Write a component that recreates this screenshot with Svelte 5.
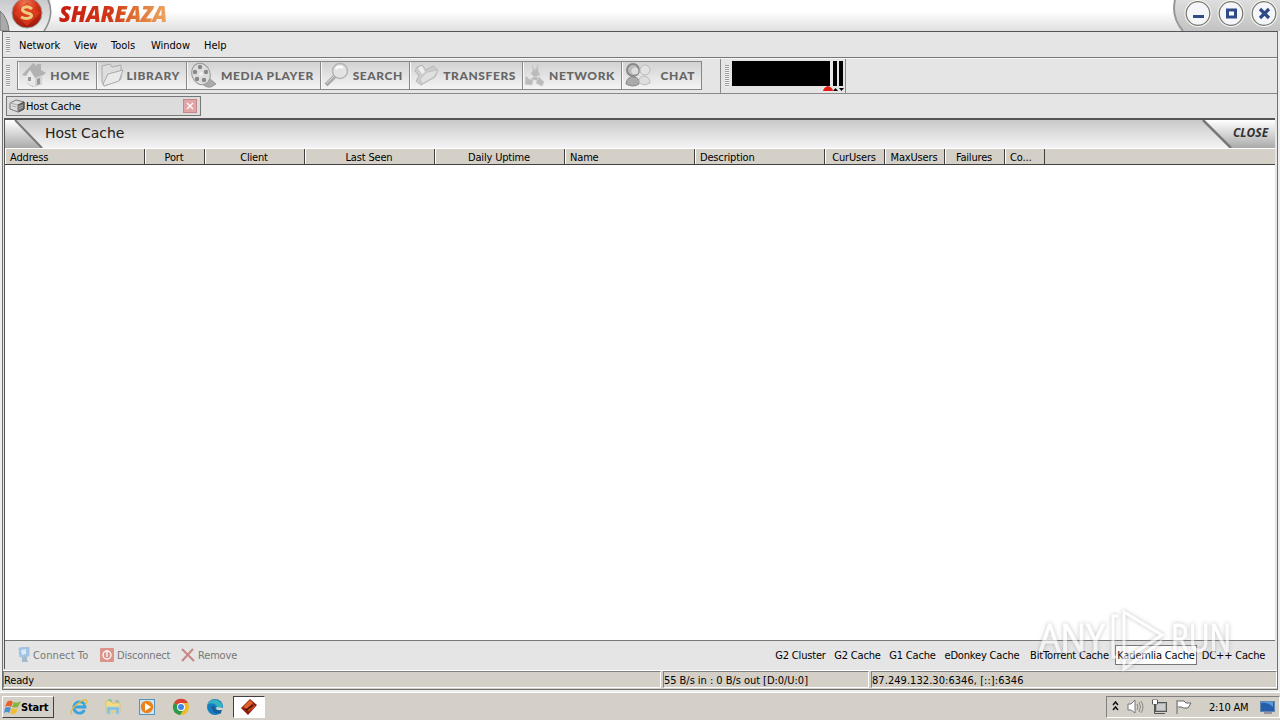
<script lang="ts">
	const menus = [
		{ text: 'Network', width: 55 },
		{ text: 'View', width: 37 },
		{ text: 'Tools', width: 40 },
		{ text: 'Window', width: 53 },
		{ text: 'Help', width: 36 }
	];

	const tools = [
		{ text: 'HOME', icon: 'home', width: 78 },
		{ text: 'LIBRARY', icon: 'library', width: 89 },
		{ text: 'MEDIA PLAYER', icon: 'media', width: 133 },
		{ text: 'SEARCH', icon: 'search', width: 88 },
		{ text: 'TRANSFERS', icon: 'transfers', width: 112 },
		{ text: 'NETWORK', icon: 'network', width: 98 },
		{ text: 'CHAT', icon: 'chat', width: 79 }
	];

	const columns = [
		{ text: 'Address', width: 140, align: 'left' },
		{ text: 'Port', width: 60, align: 'center' },
		{ text: 'Client', width: 100, align: 'center' },
		{ text: 'Last Seen', width: 130, align: 'center' },
		{ text: 'Daily Uptime', width: 130, align: 'center' },
		{ text: 'Name', width: 130, align: 'left' },
		{ text: 'Description', width: 130, align: 'left' },
		{ text: 'CurUsers', width: 60, align: 'center' },
		{ text: 'MaxUsers', width: 60, align: 'center' },
		{ text: 'Failures', width: 60, align: 'center' },
		{ text: 'Co...', width: 40, align: 'left' }
	];

	const caches = [
		{ text: 'G2 Cluster', width: 59 },
		{ text: 'G2 Cache', width: 55 },
		{ text: 'G1 Cache', width: 55 },
		{ text: 'eDonkey Cache', width: 84 },
		{ text: 'BitTorrent Cache', width: 91 },
		{ text: 'Kademlia Cache', width: 82 },
		{ text: 'DC++ Cache', width: 73 }
	];
	let selected = $state('Kademlia Cache');
</script>

<div class="screen">
	<header class="titlebar">
		<svg class="logo" width="59" height="31">
			<defs>
				<linearGradient id="disc" x1="0" y1="0" x2="0" y2="1">
					<stop offset="0" stop-color="#c8cacc" />
					<stop offset="1" stop-color="#eee" />
				</linearGradient>
				<radialGradient id="ball" cx=".45" cy=".2" r=".8">
					<stop offset="0" stop-color="#ee8060" />
					<stop offset=".45" stop-color="#d43518" />
					<stop offset="1" stop-color="#9c180b" />
				</radialGradient>
			</defs>
			<path d="M0 0H50Q54 14 44 31H0Z" fill="url(#disc)" />
			<path d="M0 11Q8 18 9 31H0Z" fill="#aaa" stroke="#777" />
			<path d="M48 0Q55 15 44 31" fill="none" stroke="#8b8b8b" stroke-width="1.5" />
			<circle cx="27" cy="13" r="15" fill="url(#ball)" stroke="#999" />
			<path d="M14 13L27 2L40 13L27 26Z" fill="#e0401f" opacity=".7" />
			<path d="M32 9Q28 5 23 8Q21 11 27 13Q33 14 31 17Q27 20 21 17" fill="none" stroke="#f0cc80" stroke-width="3" />
		</svg>
		<span class="brand">SHAREAZA</span>
		<svg class="caption" width="108" height="31">
			<defs>
				<linearGradient id="cap" x1="0" y1="0" x2="0" y2="1">
					<stop offset="0" stop-color="#dedede" />
					<stop offset="1" stop-color="#c2c2c2" />
				</linearGradient>
			</defs>
			<path d="M3 0Q-1 17 11 31H108V0Z" fill="url(#cap)" />
			<path d="M3 0Q-1 17 11 31" fill="none" stroke="#999" stroke-width="2" />
			{#each [26, 59, 92] as cx}
				<circle {cx} cy="13.500" r="13.500" fill="#f8f8f4" />
				<circle {cx} cy="13.500" r="11.800" fill="#f4f6fa" stroke="#77786e" stroke-width="1.300" />
			{/each}
			<path d="M21 16.500H32" stroke="#304a87" stroke-width="3" />
			<rect x="55.500" y="10" width="8" height="7" fill="#fff" stroke="#304a87" stroke-width="3" />
			<path d="M88 9L97 18M97 9L88 18" stroke="#304a87" stroke-width="3.200" />
		</svg>
	</header>

	<div class="frame">
		<nav class="menubar">
			<i class="grip"></i>
			{#each menus as menu}
				<span style="width: {menu.width}px">{menu.text}</span>
			{/each}
		</nav>

		<div class="toolbar">
			<i class="grip tall"></i>
			<div class="tools">
				{#each tools as tool}
					<button class={tool.icon} style="width: {tool.width}px">
						{@render toolIcon(tool.icon)}
						<span>{tool.text}</span>
					</button>
				{/each}
			</div>
			<div class="monitor">
				<i class="grip tall"></i>
				<svg width="116" height="32">
					<path d="M0 1H98V26H0ZM101 1H105V26H101ZM107 1H111V26H107Z" />
					<path d="M91 31Q92 27 96 26Q101 28 101 31Z" fill="#e31b12" />
					<path d="M101 31L103.500 28L106 31ZM107 28H112L109.500 31Z" />
				</svg>
			</div>
		</div>

		<div class="tabs">
			<div class="tab">
				<svg width="17" height="14">
					<path d="M1 4L7 1L15 3V10L9 13L1 10Z" fill="#ddd" stroke="#777" />
					<path d="M9 6L15 3V10L9 13Z" fill="#777" stroke="#444" />
					<path d="M1 4L9 6V13M3 7L7 8M10 8L14 6M10 10L14 8" fill="none" stroke="#aaa" />
				</svg>
				<span>Host Cache</span>
				<svg width="14" height="14">
					<rect x=".5" y=".5" width="13" height="13" fill="#e2a4a6" stroke="#c6878a" />
					<path d="M4 4L10 10M10 4L4 10" stroke="#fff" stroke-width="1.300" />
				</svg>
			</div>
		</div>

		<main>
			<div class="heading">
				<svg width="40" height="28">
					<defs>
						<linearGradient id="corner" x1="0" y1="0" x2="0" y2="1">
							<stop offset="0" stop-color="#fff" />
							<stop offset="1" stop-color="#aaa" />
						</linearGradient>
					</defs>
					<path d="M0 0H10L37 28H0Z" fill="url(#corner)" />
					<path d="M10 0L37 28" stroke="#777" stroke-width="2" />
				</svg>
				<h1>Host Cache</h1>
				<div class="close">
					<svg width="32" height="28">
						<path d="M2 0L30 28H32V0Z" fill="url(#corner)" />
						<path d="M2 0L30 28" stroke="#777" stroke-width="2.500" />
					</svg>
					<b>CLOSE</b>
				</div>
			</div>
			<div class="columns">
				{#each columns as column}
					<span class={column.align} style="width: {column.width}px">{column.text}</span>
				{/each}
			</div>
			<div class="list"></div>
			<div class="actions">
				<svg width="12" height="16" class="faded">
					<path d="M1 1L11 0V9L2 10Z" fill="#8bb9e7" stroke="#8fb4da" />
					<path d="M3 3L8 2V7L4 8Z" fill="#d5eafd" />
					<path d="M4 10H9V12L10 15H4Z" fill="#8fabc6" />
				</svg>
				<span class="connect">Connect To</span>
				<svg width="14" height="14">
					<rect width="14" height="14" rx="1" fill="#dc938a" />
					<circle cx="7" cy="7" r="4" fill="none" stroke="#fff" stroke-width="1.300" />
					<path d="M7 4V9" stroke="#fff" stroke-width="1.300" />
				</svg>
				<span class="disconnect">Disconnect</span>
				<svg width="14" height="14">
					<path d="M1 1L13 13M12 1L1 13" stroke="#c98686" stroke-width="2" />
				</svg>
				<span class="remove">Remove</span>
				<div class="caches">
					{#each caches as cache}
						<button class:selected={selected === cache.text} style="width: {cache.width}px" onclick={() => (selected = cache.text)}>{cache.text}</button>
					{/each}
				</div>
			</div>
		</main>

		<footer>
			<span class="ready">Ready</span>
			<span class="speed">55 B/s in : 0 B/s out [D:0/U:0]</span>
			<span class="address">87.249.132.30:6346, [::]:6346</span>
		</footer>
	</div>

	<div class="taskbar">
		<button class="start">
			<svg width="18" height="17">
				<path d="M4 3Q7 0 10 3L8 8Q5 6 2 8Z" fill="#e7612c" />
				<path d="M11 3Q14 5 18 2L15 8Q12 9 9 8Z" fill="#81b83c" />
				<path d="M2 9Q5 7 8 9L6 14Q4 12 1 14Z" fill="#4b91d1" />
				<path d="M9 9Q12 11 15 9L13 14Q9 16 7 14Z" fill="#f4bc30" />
			</svg>
			<span>Start</span>
		</button>
		<div class="apps">
			<svg viewBox="0 0 18 18">
				<path d="M14.500 12Q12 16 8 15Q3 13 4 8Q6 3 11 4Q15 5 15 9H5" fill="none" stroke="#37a4df" stroke-width="2.800" />
				<path d="M2 16Q-1 14 6 7Q13 1 16 2Q18 3 15 7" fill="none" stroke="#e7b93f" stroke-width="1.300" />
			</svg>
			<svg viewBox="0 0 18 18">
				<path d="M2 3H7L8 5H16V14H2Z" fill="#f4db84" stroke="#dcc36e" />
				<path d="M4 2H7V4M11 3H14V5" fill="none" stroke="#8cc09a" stroke-width="1.500" />
				<path d="M3 9H15V16H12V12H6V16H3Z" fill="#80bddd" stroke="#a9cfe0" />
			</svg>
			<svg viewBox="0 0 18 18">
				<rect x="1.500" y="1.500" width="15" height="15" fill="#cce5f4" stroke="#5395be" />
				<circle cx="9" cy="9" r="6.200" fill="#ec8219" />
				<path d="M7 5L13 9L7 13Z" fill="#fff" />
			</svg>
			<svg viewBox="0 0 18 18">
				<circle cx="9" cy="9" r="8" fill="#edbd29" />
				<path d="M9 9L2 5A8 8 0 0 1 16 5H9Z" fill="#d94235" />
				<path d="M2 5A8 8 0 0 0 8 17L12 11L9 9Z" fill="#2b9a4b" />
				<circle cx="9" cy="9" r="4" fill="#fff" />
				<circle cx="9" cy="9" r="3" fill="#4385e9" />
			</svg>
			<svg viewBox="0 0 18 18">
				<circle cx="9" cy="9" r="8" fill="#167dbe" />
				<path d="M2 5Q9-2 16 6Q18 11 11 12Q9 10 11 8Q8 4 2 6Z" fill="#35b5c0" />
				<path d="M7 8Q7 15 15 14" fill="none" stroke="#155f9b" stroke-width="3" />
				<path d="M11 9Q9 11 12 12L17 12V10Z" fill="#d6d0c8" />
			</svg>
			<div class="active">
				<svg viewBox="0 0 18 18">
					<path d="M1 10L10 1L17 7L8 17Z" fill="#8a1c0e" />
					<path d="M3 9L10 2L13 5L7 11Z" fill="#e0602a" />
					<path d="M9 14L16 8L12 6L7 11Z" fill="#c23c1c" />
					<path d="M6 12L13 7" fill="none" stroke="#401009" stroke-width="1.500" />
				</svg>
			</div>
		</div>
		<div class="tray">
			<svg width="9" height="12">
				<path d="M2 4L4.500 1L7 4M2 9L4.500 6L7 9" fill="none" stroke="#111" stroke-width="1.500" />
			</svg>
			<svg width="17" height="16">
				<path d="M1 5H4L8 1V14L4 11H1Z" fill="#fff" stroke="#777" />
				<path d="M10 5Q12 8 10 11M12 3Q15 8 12 13M14 2Q18 8 14 14" fill="none" stroke="#888" />
			</svg>
			<svg width="17" height="16">
				<rect x="4.500" y="3.500" width="11" height="9" fill="#aaa" stroke="#555" />
				<rect x="6" y="5" width="8" height="6" fill="#ccc" />
				<path d="M1.500 1V5H6.500V1ZM3.500 5V14.500H14" fill="none" stroke="#555" />
				<rect x="2" y="1" width="4" height="4" fill="#fff" />
			</svg>
			<svg width="17" height="16">
				<path d="M2 1V15M3 2H9L11 4H16L13 9H8L7 8H3" fill="#fff" stroke="#666" />
			</svg>
			<time>2:10 AM</time>
			<svg width="15" height="13">
				<rect x=".5" y=".5" width="14" height="10" fill="#245eac" stroke="#6388ab" />
				<path d="M1 2Q8 1 13 6V1H1Z" fill="#579add" />
				<path d="M4 12H12" stroke="#557" />
			</svg>
		</div>
	</div>

	<svg class="watermark" width="200" height="70" viewBox="0 0 200 70">
		<text x="1" y="47" textLength="66" lengthAdjust="spacingAndGlyphs">ANY</text>
		<text x="133" y="47" textLength="60" lengthAdjust="spacingAndGlyphs">RUN</text>
		<path d="M80 11H75V52H80M86 7L124 30L86 55ZM86 55V64L124 36" />
	</svg>
</div>

{#snippet toolIcon(name: string)}
	<svg class="icon" width="26" height="26" viewBox="0 0 26 26">
		{#if name === 'home'}
			<path d="M1 13L12 1L16 4V2H20V8L25 11L21 14V22L12 25L5 21V14Z" fill="#b2b2b2" />
			<path d="M5 14L9 8L14 16V25L5 21Z" fill="#e8e8e8" />
			<path d="M14 16L21 13V22L14 25Z" fill="#d2d2d2" />
			<path d="M7 15H10V19H7ZM16 17L19 16V22L16 23Z" fill="#999" />
		{:else if name === 'library'}
			<path d="M2 4L10 2L12 5L21 3V17L4 24L2 20Z" fill="#ddd" stroke="#aaa" />
			<path d="M3 22L8 12L23 8L19 19L4 24Z" fill="#e9e9e9" stroke="#aaa" />
		{:else if name === 'media'}
			<path d="M12 20L19 16L26 22L21 25Q14 26 12 20Z" fill="#aaa" stroke="#999" />
			<ellipse cx="11" cy="12" rx="9" ry="11" transform="rotate(-20 11 12)" fill="#ddd" stroke="#999" />
			<g fill="#888">
				<circle cx="10" cy="5" r="2.200" /><circle cx="5" cy="10" r="2.200" />
				<circle cx="7" cy="17" r="2.200" /><circle cx="14" cy="18" r="2.200" /><circle cx="16" cy="10" r="2.200" />
			</g>
			<circle cx="11" cy="12" r="2" fill="#eee" />
		{:else if name === 'search'}
			<path d="M2 23L11 14" stroke="#aaa" stroke-width="4" />
			<path d="M3 21L10 14" stroke="#ddd" />
			<circle cx="16" cy="9" r="7.500" fill="#e3e3e3" stroke="#b5b5b5" stroke-width="1.500" />
			<path d="M12 7Q14 3 19 6" fill="none" stroke="#fff" stroke-width="2" />
		{:else if name === 'transfers'}
			<path d="M2 9L4 5L9 3L13 8L20 4L25 8L22 15L8 23L3 19L6 14Z" fill="#ccc" stroke="#b5b5b5" />
			<path d="M7 17L14 10L25 8L21 15L9 22Z" fill="#e0e0e0" stroke="#c2c2c2" />
			<path d="M5 6L9 12L12 10L9 4Z" fill="#eee" />
		{:else if name === 'network'}
			<path d="M11 8V16L4 20M11 16L18 20" fill="none" stroke="#bbb" stroke-width="3" />
			<path d="M8 3L11 8L14 2V8L16 13L11 15L7 12L9 8ZM2 14L6 18L9 17L8 23L1 22ZM15 15L20 20L18 24L12 21Z" fill="#bbb" stroke="#ccc" />
		{:else}
			<circle cx="8" cy="8" r="6" fill="#bbb" stroke="#888" stroke-width="2" />
			<circle cx="10" cy="9" r="3.500" fill="#ddd" />
			<path d="M1 22Q2 14 9 15Q15 16 14 22Q8 26 1 22Z" fill="#aaa" stroke="#888" />
			<circle cx="20" cy="8" r="5" fill="#e2e2e2" stroke="#bbb" />
			<path d="M14 20Q14 14 19 14Q25 15 25 21Q18 25 14 20Z" fill="#ddd" stroke="#bbb" />
		{/if}
	</svg>
{/snippet}

<style>
	:global(body) {
		overflow: hidden;
	}

	.screen {
		position: relative;
		display: flex;
		flex-direction: column;
		width: 1280px;
		height: 720px;
		overflow: hidden;
		background: #eee;
		color: #000;
		font: 11px/14px 'DejaVu Sans Condensed', 'DejaVu Sans', sans-serif;
		font-stretch: condensed;
		letter-spacing: -.17px;
		white-space: nowrap;
	}
	.screen *,
	.screen *::before {
		box-sizing: border-box;
	}
	svg {
		display: block;
		flex: none;
	}
	button {
		padding: 0;
		border: 0;
		background: none;
		color: inherit;
		font: inherit;
		letter-spacing: inherit;
		white-space: nowrap;
	}

	.titlebar {
		display: flex;
		flex: none;
		height: 31px;
		background: linear-gradient(#fff 35%, #e0e0e0);
	}
	.brand {
		width: 112px;
		font: italic bold 22px/27px 'Open Sans', sans-serif;
		font-weight: 800;
		letter-spacing: -.35px;
		background: linear-gradient(90deg, #c61b10 0, #d23c18 50%, #dd6a2c 64%, #eeac66);
		background-clip: text;
		color: transparent;
	}
	.caption {
		margin-left: auto;
	}

	.frame {
		display: flex;
		flex-direction: column;
		flex: none;
		height: 659px;
		margin: 0 2px;
		border: 1px solid #707070;
		border-top-color: #555;
		background: #e5e5e5;
	}
	.grip {
		flex: none;
		width: 4px;
		height: 16px;
		background: repeating-linear-gradient(#999 0 1px, #f5f5f5 1px 2px);
	}
	.tall {
		height: 22px;
	}
	.menubar {
		display: flex;
		align-items: center;
		height: 26px;
		padding-left: 3px;
		border-bottom: 1px solid #777;
	}
	.menubar .grip {
		margin-right: 9px;
	}
	.menubar span {
		padding-top: 2px;
		letter-spacing: 0;
	}

	.toolbar {
		display: flex;
		align-items: center;
		height: 36px;
		padding-left: 3px;
		border-top: 1px solid #f8f8f8;
		border-bottom: 1px solid #888;
	}
	.tools {
		display: flex;
		gap: 1px;
		margin: 0 18px 2px 7px;
		height: 29px;
		border: 1px solid #888;
		background: #888;
	}
	.tools button {
		display: flex;
		align-items: center;
		padding: 0 6px 0 2px;
		background: linear-gradient(#d2d2d2, #f4f4f4);
		border-left: 1px solid #fafafa;
		color: #666;
		font: 900 12px/16px Lato, sans-serif;
		letter-spacing: .6px;
	}
	.tools .network {
		padding-left: 0;
	}
	.tools .network .icon,
	.tools .library .icon {
		margin-right: -4px;
	}
	.tools span {
		padding-top: 1px;
		margin-left: auto;
	}
	.monitor {
		display: flex;
		align-items: center;
		width: 126px;
		height: 34px;
		padding-left: 4px;
		border: solid #888;
		border-width: 0 1px;
	}
	.monitor svg {
		margin-left: 3px;
	}

	.tabs {
		height: 24px;
		padding: 2px 3px 0;
	}
	.tab {
		display: flex;
		align-items: center;
		width: 195px;
		height: 20px;
		padding: 0 3px 0 2px;
		border: 1px solid #777;
		background: #dcdcdc;
	}
	.tab span {
		flex: 1;
		padding-top: 1px;
	}

	main {
		display: flex;
		flex-direction: column;
		height: 551px;
		margin-right: 2px;
		margin-left: 1px;
		border: solid #555;
		border-width: 2px 0 0 1px;
	}
	.heading {
		display: flex;
		height: 28px;
		background: linear-gradient(#c9c9c9, #f4f4f4);
	}
	h1 {
		margin: 0;
		font: 14px/26px 'DejaVu Sans', sans-serif;
		letter-spacing: -.05px;
		color: #222;
	}
	.close {
		display: flex;
		margin-left: auto;
	}
	.close b {
		width: 42px;
		background: linear-gradient(#fff, #aaa);
		font: italic bold 12px/26px 'Open Sans', sans-serif;
		letter-spacing: 0;
		color: #333;
	}

	.columns {
		display: flex;
		height: 17px;
		border-top: 1px solid #fff;
		border-bottom: 1px solid #404040;
		background: #d4d0c8;
	}
	.columns span {
		padding: 2px 4px 0;
		border-left: 1px solid #fff;
		border-right: 1px solid #404040;
	}
	.columns .center {
		padding: 2px 2px 0 0;
		text-align: center;
	}
	.list {
		flex: 1;
		background: #fff;
	}
	.actions {
		display: flex;
		align-items: center;
		height: 29px;
		padding: 0 5px 0 13px;
		border-top: 1px solid #777;
		color: #777;
	}
	.actions > span {
		padding-top: 1px;
	}
	.faded {
		opacity: .75;
	}
	.connect {
		width: 67px;
		margin-left: 3px;
		letter-spacing: .1px;
	}
	.disconnect {
		width: 64px;
		margin-left: 3px;
	}
	.remove {
		margin-left: 3px;
	}
	.caches {
		display: flex;
		margin-left: auto;
		color: #000;
	}
	.caches button {
		height: 20px;
		padding-top: 1px;
		text-align: center;
	}
	.caches .selected {
		border: 1px solid #777;
		background: #fff;
	}

	footer {
		display: flex;
		gap: 2px;
		height: 19px;
		margin-top: 1px;
		border-top: 1px solid #fff;
		background: #d4d0c8;
	}
	footer span {
		height: 17px;
		border: 1px solid;
		border-color: #808080 #fff #fff #808080;
		line-height: 17px;
	}
	.ready {
		width: 658px;
	}
	.speed {
		width: 206px;
		letter-spacing: -.04px;
	}
	.address {
		flex: 1;
		letter-spacing: .05px;
	}

	.taskbar {
		display: flex;
		align-items: center;
		height: 28px;
		margin-top: 2px;
		padding: 1px 0 0 2px;
		border-top: 1px solid #fff;
		background: #d4d0c8;
	}
	.start {
		display: flex;
		align-items: center;
		width: 52px;
		height: 22px;
		border: 1px solid;
		border-color: #fff #404040 #404040 #fff;
		font-weight: bold;
	}
	.start span {
		padding-top: 1px;
	}
	.apps {
		display: flex;
		align-items: center;
		gap: 16px;
		margin-left: 16px;
	}
	.apps svg {
		width: 18px;
		height: 18px;
	}
	.active {
		display: flex;
		align-items: center;
		justify-content: center;
		width: 32px;
		height: 22px;
		margin-left: -7px;
		border: 1px solid;
		border-color: #404040 #fff #fff #404040;
		background: #fff;
	}
	.tray {
		display: flex;
		align-items: center;
		gap: 7px;
		width: 174px;
		height: 22px;
		margin-left: auto;
		padding-left: 4px;
		border: 1px solid;
		border-color: #808080 #fff #fff #808080;
	}
	time {
		width: 44px;
		margin-left: 10px;
		padding-top: 1px;
	}

	.watermark {
		position: absolute;
		top: 605px;
		left: 1038px;
		pointer-events: none;
		filter: drop-shadow(0 0 2px #999);
		opacity: .6;
	}
	.watermark text {
		fill: #fff;
		stroke: #fff;
		font: 38px 'Open Sans', sans-serif;
		letter-spacing: 0;
	}
	.watermark path {
		fill: none;
		stroke: #fff;
		stroke-width: 3px;
	}
</style>
